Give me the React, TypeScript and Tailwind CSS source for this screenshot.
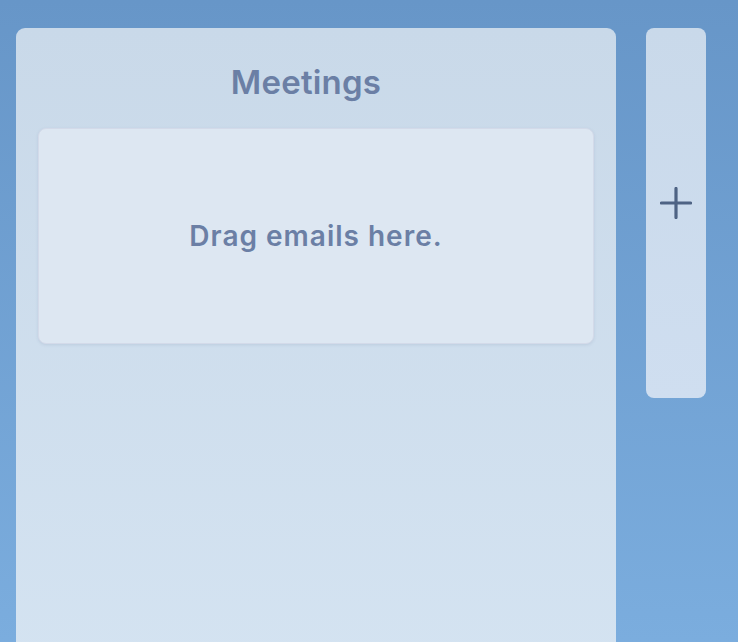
import React from "react";

export default function App() {
  return (
    <div
      className="h-[642px] w-[738px] overflow-hidden bg-gradient-to-b from-[#6796c8] to-[#7badde] flex items-start gap-[30px] pl-[16px] pt-[28px]"
      style={{ fontFamily: "Inter, 'Noto Sans', sans-serif" }}
    >
      <div className="w-[600px] h-[700px] shrink-0 rounded-[9px] bg-gradient-to-b from-[#c9d9e9] to-[#d5e4f2] px-[22px] flex flex-col">
        <div className="h-[100px] pt-[8px] pr-[20px] flex items-center justify-center">
          <span className="text-[33px] font-semibold text-[#6b7fa5] tracking-[0.2px] leading-none">Meetings</span>
        </div>
        <div className="h-[216px] rounded-[8px] bg-[#dde7f2] border border-[#d3dae9] shadow-[0_1px_3px_rgba(90,110,150,0.15)] flex items-center justify-center">
          <span className="text-[28px] font-semibold text-[#6b7fa5] tracking-[1px] leading-none">Drag emails here.</span>
        </div>
      </div>
      <div className="w-[60px] h-[370px] shrink-0 rounded-[8px] bg-gradient-to-b from-[#c9d9ea] to-[#cfdef0] flex items-center justify-center">
        <svg width="32" height="32" viewBox="0 0 32 32" className="mt-[-20px]">
          <path d="M16 1.5V30.5M1.5 16H30.5" stroke="#4e6384" strokeWidth="3.2" strokeLinecap="round" />
        </svg>
      </div>
    </div>
  );
}
